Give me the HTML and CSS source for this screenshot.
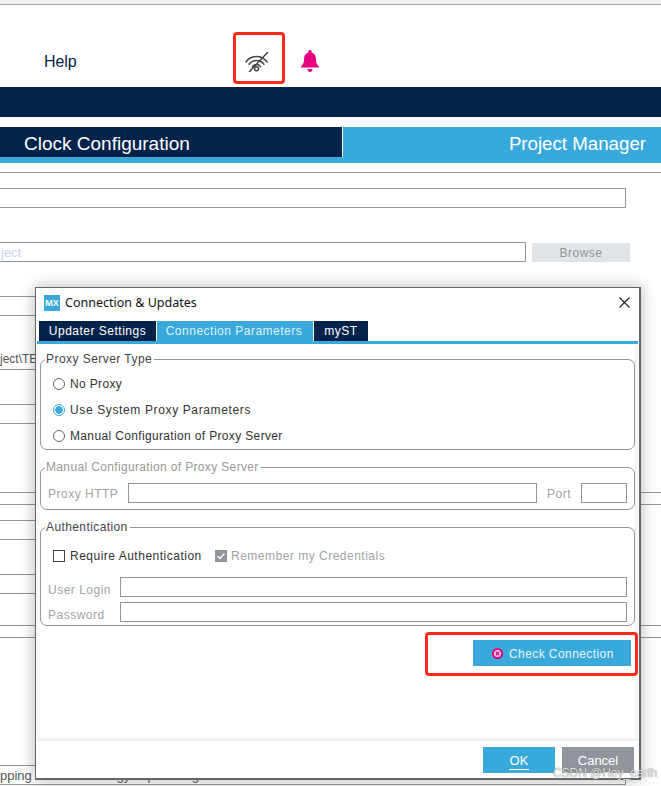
FILE: index.html
```html
<!DOCTYPE html>
<html lang="en">
<head>
<meta charset="utf-8">
<title>Connection &amp; Updates</title>
<link rel="stylesheet" href="styles.css">
</head>
<body>
<div class="page">
  <div class="topstrip"></div>
  <header class="menubar">
    <span class="help">Help</span>
    <span class="wifi-slot">
      <svg class="wifi" width="26" height="20" viewBox="0 0 26 20" fill="none" stroke="#444" stroke-width="1.500" stroke-linecap="round">
        <path d="M1.900 10A13 13 0 0 1 23.100 10"/>
        <path d="M5.100 12.300A9 9 0 0 1 19.900 12.300"/>
        <path d="M8.400 14.600A5 5 0 0 1 16.600 14.600"/>
        <circle cx="12.500" cy="16.800" r="2"/>
        <path d="M5.500 19.500L23.500 .5"/>
      </svg>
    </span>
    <svg class="bell" width="18" height="22" viewBox="0 0 18 22">
      <path fill="#e6007e" d="M9 0c1 0 1.600.7 1.600 1.700v.8C13.800 3.300 15 6 15 9.500c0 3 .8 5 3 7v1H0v-1c2.200-2 3-4 3-7C3 6 4.200 3.300 7.400 2.500v-.8C7.400.7 8 0 9 0zM6.500 19h5c0 1.800-1 3-2.500 3S6.500 20.800 6.500 19z"/>
    </svg>
  </header>
  <div class="band"></div>
  <nav class="maintabs">
    <div class="maintab-dark">Clock Configuration</div>
    <div class="maintab-light">Project Manager</div>
  </nav>
  <div class="rule rule-head"></div>
  <div class="bgform">
    <div class="bginput bginput-name"></div>
    <div class="bgrow">
      <div class="bginput bginput-loc"><span class="placeholder">ject</span></div>
      <div class="browse">Browse</div>
    </div>
    <div class="bginput bgi1"></div>
    <div class="bginput bgi2"><span class="bgtext">ject\TEST</span></div>
    <div class="bginput bgi3"></div>
    <div class="rule rule-a"></div>
    <div class="rule rule-b"></div>
    <div class="bginput bgi4"></div>
    <div class="bginput bgi5"></div>
    <div class="rule rule-c"></div>
    <div class="rule rule-d"></div>
    <div class="bginput bgi6"><span class="bgtext">pping</span><span class="bgtext-hidden">Strategy: Optimizing</span></div>
  </div>
</div>

<section class="dialog">
  <div class="titlebar">
    <span class="mx">MX</span>
    <span class="dialog-title">Connection &amp; Updates</span>
    <svg class="close" width="11" height="11" viewBox="0 0 11 11" stroke="#222" stroke-width="1.100"><path d="M.5.5l10 10M10.500.5l-10 10"/></svg>
  </div>
  <div class="dtabs">
    <span class="dtab dtab-a">Updater Settings</span>
    <span class="dtab dtab-b">Connection Parameters</span>
    <span class="dtab dtab-c">myST</span>
  </div>
  <div class="dbody">
    <fieldset class="group group-proxy">
      <legend class="legend-proxy">Proxy Server Type</legend>
      <div class="proxy-in">
        <label class="radio-row"><span class="radio"></span>No Proxy</label>
        <label class="radio-row radio-row-wide"><span class="radio radio-on"></span>Use System Proxy Parameters</label>
        <label class="radio-row"><span class="radio"></span>Manual Configuration of Proxy Server</label>
      </div>
    </fieldset>
    <fieldset class="group group-manual">
      <legend class="legend-muted">Manual Configuration of Proxy Server</legend>
      <div class="proxy-row">
        <span class="muted lbl-http">Proxy HTTP</span>
        <span class="dinput dinput-grow"></span>
        <span class="muted lbl-port">Port</span>
        <span class="dinput dinput-port"></span>
      </div>
    </fieldset>
    <fieldset class="group group-auth">
      <legend>Authentication</legend>
      <div class="check-row">
        <span class="checkbox"></span><span class="req">Require Authentication</span>
        <span class="checkbox-on"><svg width="12" height="12" viewBox="0 0 12 12" fill="none" stroke="#fff" stroke-width="1.300"><path d="M2.500 6l2.500 2.500 4.500-5"/></svg></span><span class="muted">Remember my Credentials</span>
      </div>
      <div class="login-row"><span class="muted lbl-login">User Login</span><span class="dinput dinput-grow"></span></div>
      <div class="login-row login-row-2"><span class="muted lbl-login">Password</span><span class="dinput dinput-grow"></span></div>
    </fieldset>
    <div class="check-wrap">
      <button class="check-btn">
        <svg width="11" height="11" viewBox="0 0 11 11"><circle cx="5.500" cy="5.500" r="5.500" fill="#e6007e"/><circle cx="5.500" cy="5.500" r="3.500" fill="#f6d5e8"/><path d="M3.800 3.800l3.400 3.400M7.200 3.800l-3.400 3.400" stroke="#e6007e" stroke-width="1.300"/></svg>
        <span class="check-label">Check Connection</span>
      </button>
    </div>
  </div>
  <footer class="dfooter">
    <span class="fbtn fbtn-ok"><span class="ok-u">OK</span></span>
    <span class="fbtn fbtn-cancel">Cancel</span>
  </footer>
</section>

<div class="mark mark-wifi"></div>
<div class="mark mark-check"></div>
<div class="watermark">CSDN @Hey_earth</div>
</body>
</html>
```
FILE: styles.css
```css
* { box-sizing: border-box; }
html, body { margin: 0; padding: 0; }
body {
  width: 661px; height: 786px; overflow: hidden; position: relative;
  background: #fff; font-family: "Liberation Sans", Arial, sans-serif; color: #333;
}
.page { width: 661px; }
.topstrip { height: 5px; background: #f0f0f0; border-bottom: 1px solid #a8a8a8; }
.menubar { height: 82px; display: flex; align-items: flex-start; position: relative; }
.help { margin: 48px 0 0 44px; font-size: 16px; letter-spacing: -.05px; line-height: 18px; color: #03234b; width: 200px; }
.wifi-slot { margin-top: 47px; display: block; width: 57px; height: 20px; }
.bell { margin-top: 45px; }
.band { height: 30px; background: #03234b; }
.maintabs { margin-top: 10px; height: 36px; display: flex; background: #39a9dc; align-items: flex-start; }
.maintab-dark { width: 342px; height: 30px; background: #03234b; color: #fff; font-size: 19px; line-height: 33px; padding-left: 24px; }
.maintab-light { flex: 1; height: 30px; border-left: 1px solid #fff; color: #fff; font-size: 18.700px; line-height: 33px; text-align: right; padding-right: 15px; }
.rule { height: 1px; background: #90969b; }
.rule-head { margin-top: 9px; }
.bgform { position: relative; }
.bginput { height: 20px; border: 1px solid #90969b; border-left: 0; font-size: 13px; line-height: 19px; white-space: nowrap; }
.bginput-name { width: 626px; margin-top: 15px; }
.bgrow { display: flex; margin-top: 34px; gap: 6px; align-items: flex-start; }
.bginput-loc { width: 526px; }
.placeholder { color: #c5d6ea; margin-left: 1px; }
.browse { width: 98px; height: 19px; background: #e1e4e7; color: #90969b; font-size: 12px; letter-spacing: .5px; line-height: 21px; text-align: center; margin-top: 1px; }
.bgi1 { width: 36px; margin-top: 34px; }
.bgi2 { width: 36px; margin-top: 34px; border-top: 0; font-size: 12px; }
.bgtext { color: #555; }
.bgi3 { width: 36px; margin-top: 34px; }
.rule-a { margin-top: 68px; }
.rule-b { margin-top: 11px; }
.bgi4 { width: 36px; margin-top: 15px; }
.bgi5 { width: 36px; margin-top: 34px; }
.rule-c { margin-top: 31px; }
.rule-d { margin-top: 11px; }
.bgi6 { width: 626px; margin-top: 127px; border-right: 1px solid #90969b; }
.bgtext-hidden { margin-left: 50px; color: #555; }

.dialog {
  position: absolute; left: 35px; top: 287px; width: 606px; height: 493px;
  background: #fff; border: 1px solid #666; border-right-width: 2px; border-bottom-width: 2px;
  box-shadow: 0 0 14px rgba(0,0,0,.3); display: flex; flex-direction: column;
}
.titlebar { height: 33px; display: flex; align-items: center; padding: 0 9px 4px 8px; flex: none; }
.mx { width: 16px; height: 16px; background: #39a9dc; color: #fff; font: bold 9px/16px "Liberation Sans", sans-serif; text-align: center; }
.dialog-title { margin-left: 5px; font-family: "Noto Sans", sans-serif; font-size: 12.500px; color: #111; flex: 1; }
.dtabs { display: flex; height: 20px; padding-left: 3px; gap: 1px; flex: none; }
.dtab { height: 20px; color: #fff; font-size: 12px; letter-spacing: .5px; line-height: 20px; text-align: center; background: #03234b; }
.dtab-a { width: 117px; }
.dtab-b { width: 156px; background: #39a9dc; color: #dff1fa; padding-right: 2px; }
.dtab-c { width: 54px; }
.dbody { border-top: 3px solid #39a9dc; margin: 0 1px; flex: 1; padding: 8px 3px 0 3px; border-bottom: 3px solid #f2f2f2; box-shadow: inset 2px 0 0 #f4f4f4, inset -3px 0 0 #f4f4f4; }
.group { margin: 0; padding: 0; border: 1px solid #90969b; border-radius: 7px; font-size: 12px; min-width: 0; display: block; width: 595px; color: #333; }
.group legend { font-size: 12px; line-height: 14px; padding: 0 2px 0 1px; margin-left: 4px; letter-spacing: .4px; color: #444; }
.group .legend-proxy { letter-spacing: .45px; }
.group .legend-muted { color: #999; letter-spacing: .35px; }
.muted { color: #a0a4a8; letter-spacing: .5px; }
.group-proxy { height: 98px; }
.proxy-in { padding: 5px 0 0 12px; }
.radio-row { display: flex; align-items: center; height: 26px; gap: 5px; letter-spacing: .35px; color: #333; }
.radio-row-wide { letter-spacing: .63px; }
.radio { width: 12px; height: 12px; border-radius: 50%; border: 1px solid #666; flex: none; display: block; }
.radio-on { border-color: #39a9dc; background: radial-gradient(circle, #39a9dc 0 3.500px, #fff 4px); }
.group-manual { height: 50px; margin-top: 10px; }
.proxy-row { display: flex; align-items: center; height: 20px; margin: 9px 7px 0 7px; }
.lbl-http { width: 80px; flex: none; padding-top: 2px; }
.lbl-port { width: 34px; margin-left: 10px; flex: none; padding-top: 2px; }
.dinput { height: 20px; border: 1px solid #90969b; display: block; }
.dinput-grow { flex: 1; }
.dinput-port { width: 46px; flex: none; }
.group-auth { height: 106px; margin-top: 10px; }
.check-row { display: flex; align-items: center; height: 24px; margin: 10px 7px 9px 12px; }
.checkbox { width: 12px; height: 12px; border: 1px solid #444; margin-right: 5px; }
.req { width: 145px; letter-spacing: .5px; color: #333; }
.checkbox-on { width: 12px; height: 12px; background: #90969b; margin-right: 4px; display: block; line-height: 0; }
.login-row { display: flex; align-items: center; height: 20px; margin: 0 7px; }
.login-row-2 { margin-top: 5px; }
.lbl-login { width: 72px; flex: none; padding-top: 5px; }
.check-wrap { display: flex; justify-content: flex-end; margin-top: 14px; padding-right: 4px; width: 595px; }
.check-btn { width: 158px; height: 26px; background: #39a9dc; border: 0; color: #e6f5fb; font: 12px "Liberation Sans", sans-serif; letter-spacing: .42px; display: flex; align-items: center; padding: 0 0 0 19px; gap: 6px; }
.check-label { padding-top: 1px; }
.dfooter { height: 37px; flex: none; display: flex; justify-content: flex-end; gap: 7px; padding: 6px 5px 0 0; }
.fbtn { width: 72px; height: 26px; color: #fff; font-size: 13px; line-height: 27px; text-align: center; }
.fbtn-ok { background: #39a9dc; }
.ok-u { border-bottom: 1px solid #fff; padding: 0 1px 1px; }
.fbtn-cancel { background: #90969b; }

.mark { position: absolute; border: 3px solid #ff2a1a; border-radius: 4px; }
.mark-wifi { left: 233px; top: 32px; width: 52px; height: 52px; }
.mark-check { left: 425px; top: 632px; width: 213px; height: 44px; }
.watermark { position: absolute; left: 553px; top: 766px; font-size: 12px; letter-spacing: -.05px; color: rgba(255,255,255,.8); text-shadow: 0 0 1px #555; white-space: nowrap; }
```
